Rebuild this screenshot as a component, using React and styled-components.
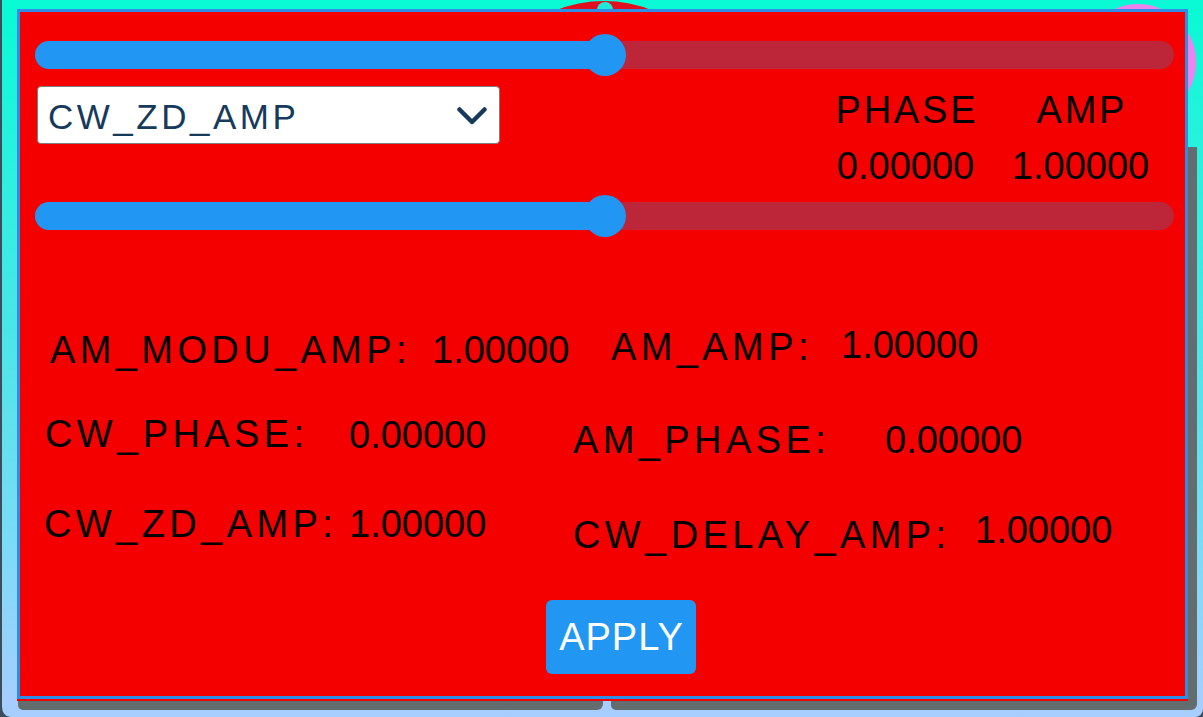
import React, { useState } from "react";
import styled, { createGlobalStyle } from "styled-components";

const GlobalStyle = createGlobalStyle`
  html, body {
    margin: 0;
    padding: 0;
    background: #3b4d5c;
    overflow: hidden;
  }
  * {
    box-sizing: border-box;
  }
`;

const Screen = styled.div`
  position: relative;
  width: 1203px;
  height: 717px;
  border-left: 2px solid #3b4d5c;
  border-radius: 0 0 8px 10px;
  overflow: hidden;
  padding: 9px 15px 0 15px;
  font-family: "Liberation Sans", Arial, sans-serif;
  background: linear-gradient(
    180deg,
    #08fad4 0%,
    #2ef0df 25%,
    #48e6e6 45%,
    #7adbf6 75%,
    #a8cdff 100%
  );
`;

// things sitting behind the panel
const Disc = styled.div`
  position: absolute;
  left: ${(p) => p.$x}px;
  top: ${(p) => p.$y}px;
  width: ${(p) => p.$size}px;
  height: ${(p) => p.$size}px;
  border-radius: 50%;
  background: ${(p) => p.$color};
`;

const Shadow = styled.div`
  position: absolute;
  left: ${(p) => p.$x}px;
  top: ${(p) => p.$y}px;
  width: ${(p) => p.$w}px;
  height: ${(p) => p.$h}px;
  background: #636d6d;
  border-radius: 0 0 6px 5px;
`;

const Panel = styled.div`
  position: relative;
  z-index: 1;
  height: 690px;
  border: 3px solid #2f8de6;
  background: #f40000;
  box-shadow: 0 2px 0 #f40000;
  display: flex;
  flex-direction: column;
  padding-top: 22px;
`;

const SliderWrap = styled.div`
  position: relative;
  height: 42px;
  margin: ${(p) => p.$mt}px 11px 0 15px;
  display: flex;
  align-items: center;
`;

const Track = styled.div`
  position: relative;
  flex: 1;
  height: 28px;
  border-radius: 14px;
  background: #bd2539;
  overflow: hidden;
`;

const Fill = styled.div`
  height: 100%;
  background: #2196f3;
`;

const Thumb = styled.div`
  position: absolute;
  top: 0;
  width: 42px;
  height: 42px;
  margin-left: -21px;
  border-radius: 50%;
  background: #2196f3;
`;

const MiddleRow = styled.div`
  display: flex;
  justify-content: space-between;
  align-items: flex-start;
  margin-top: 10px;
  padding: 0 17px 0 17px;
`;

const Dropdown = styled.div`
  width: 463px;
  height: 58px;
  border: 1px solid #7d7d7d;
  border-radius: 4px;
  background: #fff;
  display: flex;
  align-items: center;
  justify-content: space-between;
  padding: 2px 12px 0 10px;
  cursor: pointer;
`;

const DropdownText = styled.span`
  font-size: 35px;
  line-height: 35px;
  letter-spacing: 3.5px;
  color: #163a5c;
`;

const ValueTable = styled.div`
  display: grid;
  grid-template-columns: 175px 175px;
  row-gap: 18px;
  margin-top: 5px;
  font-size: 38px;
  line-height: 38px;
  text-align: center;
  color: #000;
`;

const HeadCell = styled.div`
  letter-spacing: 2.8px;
  padding-left: 2.8px;
`;

const ValueCell = styled.div`
  letter-spacing: 0;
`;

const FieldGrid = styled.div`
  display: grid;
  grid-template-columns: 529px 1fr;
  grid-auto-rows: 88px;
  margin-top: 88px;
  padding-left: 24px;
`;

const Field = styled.div`
  display: flex;
  align-items: flex-start;
  margin: ${(p) => p.$mt}px 0 0 ${(p) => p.$ml}px;
  font-size: 38px;
  line-height: 38px;
  color: #000;
  white-space: nowrap;
`;

const FieldLabel = styled.span`
  width: ${(p) => p.$w}px;
  flex-shrink: 0;
  letter-spacing: 4.4px;
`;

const FieldValue = styled.span`
  margin-top: ${(p) => p.$vy || 0}px;
`;

const ButtonRow = styled.div`
  display: flex;
  justify-content: center;
  margin-top: 11px;
  padding-left: 37px;
`;

const ApplyButton = styled.button`
  width: 150px;
  height: 74px;
  border: none;
  border-radius: 6px;
  background: #2196f3;
  color: #fff;
  font-family: "Liberation Sans", Arial, sans-serif;
  font-size: 38px;
  letter-spacing: 1px;
  padding: 0 0 0 1px;
  display: flex;
  align-items: center;
  justify-content: center;
  cursor: pointer;
`;

function Slider({ value, mt }) {
  const pct = value * 100;
  return (
    <SliderWrap $mt={mt}>
      <Track>
        <Fill style={{ width: pct + "%" }} />
      </Track>
      <Thumb style={{ left: pct + "%" }} />
    </SliderWrap>
  );
}

const fields = [
  { label: "AM_MODU_AMP:", value: "1.00000", ml: 6, mt: 6, w: 382 },
  { label: "AM_AMP:", value: "1.00000", ml: 38, mt: 3, w: 230, vy: -2 },
  { label: "CW_PHASE:", value: "0.00000", ml: 1, mt: 2, w: 304, vy: 1 },
  { label: "AM_PHASE:", value: "0.00000", ml: 0, mt: 8, w: 312 },
  { label: "CW_ZD_AMP:", value: "1.00000", ml: 0, mt: 4, w: 305 },
  { label: "CW_DELAY_AMP:", value: "1.00000", ml: 0, mt: 15, w: 402, vy: -5 },
];

function App() {
  const [mode] = useState("CW_ZD_AMP");

  return (
    <>
      <GlobalStyle />
      <Screen>
        <Disc $x={472} $y={1} $size={260} $color="#e2101f" />
        <Disc $x={595} $y={2} $size={16} $color="#1ee9d8" />
        <Disc $x={1078} $y={4} $size={116} $color="#ee82ee" />
        <Shadow $x={16} $y={690} $w={585} $h={20} />
        <Shadow $x={609} $y={147} $w={586} $h={563} />

        <Panel>
          <Slider value={0.5} mt={0} />

          <MiddleRow>
            <Dropdown>
              <DropdownText>{mode}</DropdownText>
              <svg width="30" height="19" viewBox="0 0 30 19">
                <polyline
                  points="2.5,2.5 15,15 27.5,2.5"
                  fill="none"
                  stroke="#163a5c"
                  strokeWidth="4.5"
                  strokeLinecap="round"
                  strokeLinejoin="round"
                />
              </svg>
            </Dropdown>

            <ValueTable>
              <HeadCell>PHASE</HeadCell>
              <HeadCell>AMP</HeadCell>
              <ValueCell>0.00000</ValueCell>
              <ValueCell>1.00000</ValueCell>
            </ValueTable>
          </MiddleRow>

          <Slider value={0.5} mt={10} />

          <FieldGrid>
            {fields.map((f) => (
              <Field key={f.label} $ml={f.ml} $mt={f.mt}>
                <FieldLabel $w={f.w}>{f.label}</FieldLabel>
                <FieldValue $vy={f.vy}>{f.value}</FieldValue>
              </Field>
            ))}
          </FieldGrid>

          <ButtonRow>
            <ApplyButton>APPLY</ApplyButton>
          </ButtonRow>
        </Panel>
      </Screen>
    </>
  );
}

export default App;
